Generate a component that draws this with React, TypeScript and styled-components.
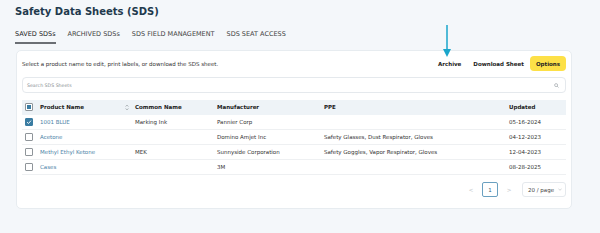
import React from "react";
import styled, { createGlobalStyle } from "styled-components";

const GlobalStyle = createGlobalStyle`
  html, body {
    margin: 0;
    padding: 0;
    background: #f4f7fa;
    font-family: "DejaVu Sans", Verdana, sans-serif;
    color: #333;
  }
`;

const Page = styled.div`
  position: relative;
  width: 600px;
  height: 233px;
  box-sizing: border-box;
  padding: 6px 28px 0 15px;
  overflow: hidden;
`;

const Title = styled.h1`
  margin: 0;
  font-size: 10px;
  line-height: 12px;
  font-weight: 700;
  color: #1f3a4d;
`;

const Tabs = styled.div`
  display: flex;
  gap: 12px;
  margin-top: 12px;
`;

const Tab = styled.div<{ $active?: boolean }>`
  font-size: 6.5px;
  line-height: 8px;
  padding-bottom: 4px;
  color: ${(p) => (p.$active ? "#222" : "#444")};
  border-bottom: 2px solid ${(p) => (p.$active ? "#6b6f74" : "transparent")};
  white-space: nowrap;
`;

const Card = styled.div`
  margin: 6px 0 0 1px;
  background: #fff;
  border: 1px solid #e7ecf0;
  border-radius: 5px;
  padding: 5px 5px 11px 5px;
`;

const Toolbar = styled.div`
  display: flex;
  align-items: center;
  height: 15px;
`;

const Hint = styled.div`
  flex: 1;
  font-size: 5.5px;
  color: #333;
`;

const TextButton = styled.button<{ $primary?: boolean }>`
  border: none;
  font-family: inherit;
  font-size: 5.5px;
  font-weight: 700;
  color: #222;
  height: 15px;
  padding: 0 6px;
  border-radius: 4px;
  background: ${(p) => (p.$primary ? "#fde047" : "transparent")};
`;

const Search = styled.div`
  margin-top: 6px;
  height: 16px;
  box-sizing: border-box;
  border: 1px solid #e5e9ed;
  border-radius: 4px;
  display: flex;
  align-items: center;
  justify-content: space-between;
  padding: 0 6px 0 4px;
`;

const Placeholder = styled.span`
  font-size: 4.7px;
  color: #8a8f94;
`;

const Table = styled.div`
  margin-top: 7px;
`;

const Row = styled.div<{ $head?: boolean }>`
  display: grid;
  grid-template-columns: 15px 95px 82px 107px 185px 1fr;
  align-items: center;
  height: 15px;
  box-sizing: border-box;
  background: ${(p) => (p.$head ? "#eef3f7" : "#fff")};
  border-bottom: 1px solid ${(p) => (p.$head ? "#eef3f7" : "#eef0f2")};
  font-size: 5.5px;
  font-weight: ${(p) => (p.$head ? 700 : 400)};
  color: ${(p) => (p.$head ? "#222" : "#333")};
`;

const Cell = styled.div`
  padding: 0 3px;
  white-space: nowrap;
  display: flex;
  align-items: center;
  justify-content: space-between;
`;

const Link = styled.span`
  color: #4a82a6;
`;

const Box = styled.span<{ $checked?: boolean }>`
  width: 8px;
  height: 8px;
  box-sizing: border-box;
  border-radius: 1px;
  border: 1px solid ${(p) => (p.$checked ? "#3a7ca2" : "#8f959a")};
  background: ${(p) => (p.$checked ? "#3a7ca2" : "#fff")};
  display: flex;
  align-items: center;
  justify-content: center;
  margin-left: 3px;
`;

const Dot = styled.span`
  width: 4px;
  height: 4px;
  background: #3a7ca2;
`;

const Pager = styled.div`
  margin-top: 7px;
  display: flex;
  justify-content: flex-end;
  align-items: center;
  gap: 3px;
  height: 15px;
`;

const PageItem = styled.div<{ $active?: boolean }>`
  width: 16px;
  height: 15px;
  box-sizing: border-box;
  border-radius: 2px;
  border: 1px solid ${(p) => (p.$active ? "#6aa0c0" : "transparent")};
  display: flex;
  align-items: center;
  justify-content: center;
  font-size: 5.5px;
  color: ${(p) => (p.$active ? "#2f5f7d" : "#c5c9cd")};
`;

const SizeSelect = styled.div`
  margin-left: 2px;
  width: 44px;
  height: 15px;
  box-sizing: border-box;
  border: 1px solid #e5e9ed;
  border-radius: 3px;
  display: flex;
  align-items: center;
  justify-content: space-between;
  padding: 0 3px 0 5px;
  font-size: 5.5px;
  color: #444;
`;

const Arrow = styled.svg`
  position: absolute;
  left: 442px;
  top: 25px;
`;

const Check = () => (
  <svg width="6" height="6" viewBox="0 0 6 6">
    <path d="M1 3.1 L2.5 4.5 L5 1.6" fill="none" stroke="#fff" strokeWidth="0.9" />
  </svg>
);

const SortIcon = () => (
  <svg width="4" height="7" viewBox="0 0 4 7">
    <path d="M0.6 2.6 L2 1 L3.4 2.6 M0.6 4.4 L2 6 L3.4 4.4" fill="none" stroke="#9aa0a5" strokeWidth="0.7" />
  </svg>
);

const rows = [
  { name: "1001 BLUE", common: "Marking Ink", maker: "Pannier Corp", ppe: "", date: "05-16-2024", checked: true },
  { name: "Acetone", common: "", maker: "Domino Amjet Inc", ppe: "Safety Glasses, Dust Respirator, Gloves", date: "04-12-2023" },
  { name: "Methyl Ethyl Ketone", common: "MEK", maker: "Sunnyside Corporation", ppe: "Safety Goggles, Vapor Respirator, Gloves", date: "12-04-2023" },
  { name: "Cases", common: "", maker: "3M", ppe: "", date: "08-28-2025" },
];

export default function App() {
  return (
    <Page>
      <GlobalStyle />
      <Title>Safety Data Sheets (SDS)</Title>
      <Tabs>
        <Tab $active>SAVED SDSs</Tab>
        <Tab>ARCHIVED SDSs</Tab>
        <Tab>SDS FIELD MANAGEMENT</Tab>
        <Tab>SDS SEAT ACCESS</Tab>
      </Tabs>
      <Card>
        <Toolbar>
          <Hint>Select a product name to edit, print labels, or download the SDS sheet.</Hint>
          <TextButton>Archive</TextButton>
          <TextButton>Download Sheet</TextButton>
          <TextButton $primary>Options</TextButton>
        </Toolbar>
        <Search>
          <Placeholder>Search SDS Sheets</Placeholder>
          <svg width="5" height="5" viewBox="0 0 10 10">
            <circle cx="4.2" cy="4.2" r="3" fill="none" stroke="#9aa0a5" strokeWidth="1.3" />
            <path d="M6.4 6.4 L9 9" stroke="#9aa0a5" strokeWidth="1.4" />
          </svg>
        </Search>
        <Table>
          <Row $head>
            <Box>
              <Dot />
            </Box>
            <Cell>
              Product Name
              <SortIcon />
            </Cell>
            <Cell>Common Name</Cell>
            <Cell>Manufacturer</Cell>
            <Cell>PPE</Cell>
            <Cell>Updated</Cell>
          </Row>
          {rows.map((r) => (
            <Row key={r.name}>
              <Box $checked={r.checked}>{r.checked && <Check />}</Box>
              <Cell>
                <Link>{r.name}</Link>
              </Cell>
              <Cell>{r.common}</Cell>
              <Cell>{r.maker}</Cell>
              <Cell>{r.ppe}</Cell>
              <Cell>{r.date}</Cell>
            </Row>
          ))}
        </Table>
        <Pager>
          <PageItem>&lt;</PageItem>
          <PageItem $active>1</PageItem>
          <PageItem>&gt;</PageItem>
          <SizeSelect>
            20 / page
            <svg width="4" height="3" viewBox="0 0 4 3">
              <path d="M0.4 0.6 L2 2.3 L3.6 0.6" fill="none" stroke="#b5babe" strokeWidth="0.6" />
            </svg>
          </SizeSelect>
        </Pager>
      </Card>
      <Arrow width="10" height="33" viewBox="0 0 10 33">
        <path d="M5 0 V26" stroke="#1aa6cb" strokeWidth="1.5" />
        <path d="M1 24 L9 24 L5 32 Z" fill="#1aa6cb" />
      </Arrow>
    </Page>
  );
}
